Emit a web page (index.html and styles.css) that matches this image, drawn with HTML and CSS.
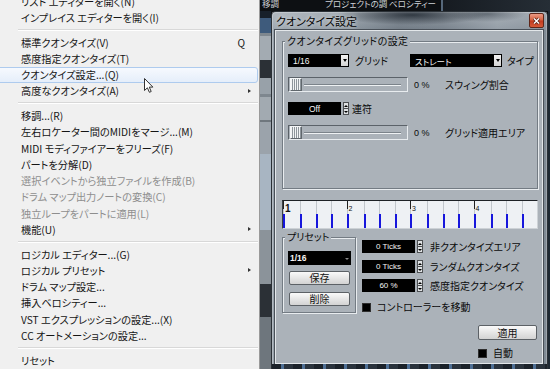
FILE: index.html
```html
<!DOCTYPE html>
<html lang="ja">
<head>
    <meta charset="UTF-8">
    <meta name="viewport" content="width=device-width, initial-scale=1.0">
    <title>クオンタイズ設定</title>
    <link rel="stylesheet" href="styles.css">
</head>
<body>
<div class="screen">
    <div class="menu">
        <ul class="menu-list">
            <li class="item">リスト エディターを開く(N)</li>
            <li class="item">インプレイス エディターを開く(I)</li>
            <li class="sep"></li>
            <li class="item">標準クオンタイズ(V)<span class="key">Q</span></li>
            <li class="item">感度指定クオンタイズ(T)</li>
            <li class="item hot">クオンタイズ設定...(Q)</li>
            <li class="item sub">高度なクオンタイズ(A)</li>
            <li class="sep"></li>
            <li class="item">移調...(R)</li>
            <li class="item">左右ロケーター間のMIDIをマージ...(M)</li>
            <li class="item">MIDI モディファイアーをフリーズ(F)</li>
            <li class="item">パートを分解(D)</li>
            <li class="item off">選択イベントから独立ファイルを作成(B)</li>
            <li class="item off">ドラム マップ出力ノートの変換(C)</li>
            <li class="item off">独立ループをパートに適用(L)</li>
            <li class="item sub">機能(U)</li>
            <li class="sep"></li>
            <li class="item">ロジカル エディター...(G)</li>
            <li class="item sub">ロジカル プリセット</li>
            <li class="item">ドラム マップ設定...</li>
            <li class="item">挿入ベロシティー...</li>
            <li class="item">VST エクスプレッションの設定...(X)</li>
            <li class="item">CC オートメーションの設定...</li>
            <li class="sep"></li>
            <li class="item">リセット</li>
        </ul>
        <svg class="cursor" width="10" height="16" viewBox="0 0 10 16">
            <path d="M0.5 0.5V12.5L3.4 9.8L5.4 14.3L7.2 13.5L5.3 9.1H8.9Z" fill="#fff" stroke="#333" stroke-width="1"/>
        </svg>
    </div>

    <div class="desk">
        <div class="desk-top">
            <span class="col-a">移調</span>
            <span class="col-b">プロジェクトの調</span>
            <span class="col-c">ベロシティー</span>
            <span class="col-sep"></span>
            <span class="col-rest"></span>
        </div>
        <div class="desk-main">
            <div class="tracks">
                <div class="t-dark"></div>
                <div class="t-blue"></div>
                <div class="t-line"></div>
                <div class="t-grey"></div>
                <div class="t-shade"></div>
                <div class="t-part"></div>
                <div class="t-line"></div>
                <div class="t-part tall"></div>
                <div class="t-lane"></div>
                <div class="t-mid"></div>
                <div class="t-shade low"></div>
                <div class="t-end"></div>
            </div>

            <div class="window">
                <div class="titlebar">
                    <span class="title">クオンタイズ設定</span>
                    <span class="close">
                        <svg width="9" height="8" viewBox="0 0 9 8">
                            <path d="M2 1.5L7 6.5M7 1.5L2 6.5" stroke="#5a2418" stroke-width="3"/>
                            <path d="M2 1.5L7 6.5M7 1.5L2 6.5" stroke="#fff" stroke-width="1.4"/>
                        </svg>
                    </span>
                </div>

                <div class="client">
                    <fieldset class="group grid-set">
                        <legend>クオンタイズグリッドの設定</legend>
                        <div class="row">
                            <div class="dd w61">1/16<span class="dd-btn"></span></div>
                            <span class="lbl w55">グリッド</span>
                            <div class="dd w92">ストレート<span class="dd-btn"></span></div>
                            <span class="lbl ml5">タイプ</span>
                        </div>
                        <div class="row mt10">
                            <div class="slider"><span class="thumb"></span><span class="groove"></span></div>
                            <span class="pct">0 %</span>
                            <span class="lbl">スウィング割合</span>
                        </div>
                        <div class="row mt10">
                            <div class="field w53 h14">Off</div>
                            <span class="spin"><i class="up"></i><i class="down"></i></span>
                            <span class="lbl ml3">連符</span>
                        </div>
                        <div class="row mt10">
                            <div class="slider"><span class="thumb"></span><span class="groove"></span></div>
                            <span class="pct">0 %</span>
                            <span class="lbl">グリッド適用エリア</span>
                        </div>
                    </fieldset>

                    <div class="grid">
                        <div class="cell bar first">1</div>
                        <div class="cell"></div>
                        <div class="cell"></div>
                        <div class="cell"></div>
                        <div class="cell bar">2</div>
                        <div class="cell"></div>
                        <div class="cell"></div>
                        <div class="cell"></div>
                        <div class="cell bar">3</div>
                        <div class="cell"></div>
                        <div class="cell"></div>
                        <div class="cell"></div>
                        <div class="cell bar">4</div>
                        <div class="cell"></div>
                        <div class="cell"></div>
                        <div class="cell"></div>
                    </div>

                    <div class="bottom">
                        <fieldset class="group preset">
                            <legend>プリセット</legend>
                            <div class="dd dd-preset">1/16<span class="dd-arrow"></span></div>
                            <button class="btn">保存</button>
                            <button class="btn mt7">削除</button>
                        </fieldset>
                        <div class="params">
                            <div class="row">
                                <div class="field w53">0 Ticks</div>
                                <span class="spin"><i class="up"></i><i class="down"></i></span>
                                <span class="lbl ml7">非クオンタイズエリア</span>
                            </div>
                            <div class="row mt7">
                                <div class="field w53">0 Ticks</div>
                                <span class="spin"><i class="up"></i><i class="down"></i></span>
                                <span class="lbl ml7">ランダムクオンタイズ</span>
                            </div>
                            <div class="row mt6">
                                <div class="field w53">60 %</div>
                                <span class="spin"><i class="up"></i><i class="down"></i></span>
                                <span class="lbl ml7">感度指定クオンタイズ</span>
                            </div>
                            <div class="row mt9">
                                <span class="check"></span>
                                <span class="lbl ml6">コントローラーを移動</span>
                            </div>
                        </div>
                    </div>

                    <div class="apply">
                        <button class="btn btn-apply">適用</button>
                        <div class="row mt7">
                            <span class="check"></span>
                            <span class="lbl ml6">自動</span>
                        </div>
                    </div>
                </div>
                <div class="win-bottom"></div>
            </div>
            <div class="desk-edge"></div>
        </div>
    </div>
</div>
</body>
</html>
```

FILE: styles.css
```css
* {
    box-sizing: border-box;
}
body {
    margin: 0;
    background: #14181c;
    overflow: hidden;
}
.screen {
    display: flex;
    width: 550px;
    height: 369px;
    overflow: hidden;
    font-family: "Noto Sans CJK JP", "Noto Sans", sans-serif;
    font-feature-settings: "palt";
}

/* context menu */
.menu {
    position: relative;
    flex: none;
    width: 260px;
    background: #f0f0f0;
    border-right: 1px solid #9a9a9a;
    font-size: 10.2px;
    color: #151515;
}
.menu-list {
    list-style: none;
    margin: -7px 0 0;
    padding: 0;
}
.item {
    display: flex;
    align-items: center;
    height: 16.25px;
    padding-left: 21px;
    white-space: nowrap;
}
.item.off {
    color: #8e8e8e;
}
.item.hot {
    margin: 0 1px 0 -4px;
    padding-left: 24px;
    background: linear-gradient(#f6f9fe, #e5eefa);
    border: 1px solid #aecbee;
    border-radius: 3px;
}
.key {
    margin-left: auto;
    margin-right: 14px;
}
.sub::after {
    content: "";
    margin-left: auto;
    margin-right: 8px;
    border-left: 3px solid #333;
    border-top: 2.5px solid transparent;
    border-bottom: 2.5px solid transparent;
}
.sep {
    display: flex;
    align-items: center;
    height: 8.5px;
    padding: 0 1px 0 18px;
}
.sep::after {
    content: "";
    flex: 1;
    border-top: 1px solid #d8d8d8;
    border-bottom: 1px solid #fff;
}
.cursor {
    position: absolute;
    left: 144px;
    top: 78px;
}

/* cubase behind the dialog */
.desk {
    display: flex;
    flex-direction: column;
    flex: none;
    width: 290px;
    background: #0d1013;
}
.desk-top {
    display: flex;
    height: 11px;
    overflow: hidden;
    color: #cdd2d6;
    font-size: 8.5px;
    line-height: 9px;
    white-space: nowrap;
}
.desk-top span {
    flex: none;
    margin-top: -1px;
    overflow: hidden;
}
.col-a { width: 65px; padding-left: 2px; }
.col-b { width: 64px; }
.col-c { width: 52px; }
.col-sep {
    width: 2px;
    margin-top: 0 !important;
    background: #56687b;
}
.desk-top .col-rest {
    flex: 1;
    margin-top: 0;
    background: linear-gradient(90deg, #161b21, #262e36);
}
.desk-main {
    display: flex;
    flex: 1;
}
.tracks {
    display: flex;
    flex-direction: column;
    width: 11px;
}
.t-dark { height: 7px; background: #17202a; }
.t-blue { height: 15px; background: #3e5b7c; }
.t-line { height: 3px; background: #7e878f; }
.t-grey { height: 24px; background: #a3abb2; }
.t-shade { height: 18px; background: #2b3036; }
.t-shade.low { height: 33px; }
.t-part { height: 16px; background: #98a1a9; }
.t-part.tall { height: 57px; background: linear-gradient(#a2aab1 0 40%, #6f777e 40% 44%, #9ba3ab 44%); }
.t-lane { height: 76px; background: #a8b5c2; }
.t-mid { height: 54px; background: #8b939a; }
.t-end { flex: 1; background: #6e767d; }
.desk-edge {
    flex: 1;
    background: #1e2933;
}

/* dialog window */
.window {
    display: flex;
    flex-direction: column;
    width: 277px;
    border: 1px solid #2a3036;
    border-bottom: 0;
    border-radius: 5px 5px 0 0;
    background: linear-gradient(90deg, #98a2ab 0%, #8a959f 22%, #66717c 46%, #6d7883 62%, #8c96a0 82%, #7f8a94 100%);
    box-shadow: inset 0 0 0 1px rgba(255, 255, 255, 0.25);
}
.titlebar {
    display: flex;
    height: 18px;
    padding-left: 4px;
    background:
        radial-gradient(ellipse 75px 10px at 140px 3px, rgba(28, 36, 45, 0.8), rgba(28, 36, 45, 0)),
        radial-gradient(ellipse 40px 8px at 215px 2px, rgba(40, 50, 60, 0.5), rgba(40, 50, 60, 0)),
        linear-gradient(rgba(255, 255, 255, 0.25), rgba(255, 255, 255, 0.08));
}
.title {
    font-size: 11px;
    line-height: 18px;
    color: #050505;
    text-shadow: 0 0 4px rgba(255, 255, 255, 0.8);
}
.close {
    display: flex;
    align-items: center;
    justify-content: center;
    width: 15px;
    height: 15px;
    margin: 1px 3px 0 auto;
    border: 1px solid #5e2619;
    border-radius: 2px;
    background: linear-gradient(#eb9a84, #d4603f 48%, #c0391d 52%, #d65a38);
}
.client {
    height: 334px;
    margin: 0 4px 0 3px;
    padding: 4px 4px 0 6px;
    background: #abb2b9;
    border: 1px solid #e3e7ea;
    box-shadow: 0 0 0 1px #495058;
    font-size: 10px;
    color: #0a0a0a;
}
.win-bottom {
    height: 5px;
    margin-top: auto;
    background: repeating-linear-gradient(90deg, #1b222a 0 9px, #4e6f95 9px 12px, #2a333d 12px 21px);
}

/* group boxes */
.group {
    margin: 0;
    min-width: 0;
    border: 1px solid #737b83;
    box-shadow: inset 1px 1px 0 #e8ecef, 1px 1px 0 #e8ecef;
}
.group legend {
    margin-left: -3px;
    padding: 0 2px;
    line-height: 12px;
    background: #abb2b9;
}
.grid-set legend {
    letter-spacing: 0.4px;
}
.grid-set {
    padding: 7px 0 48px 5px;
}
.row {
    display: flex;
    align-items: center;
}
.lbl {
    line-height: 12px;
    white-space: nowrap;
}
.mt6 { margin-top: 6px; }
.mt7 { margin-top: 7px; }
.mt9 { margin-top: 9px; }
.mt10 { margin-top: 10px; }
.ml3 { margin-left: 3px; }
.ml5 { margin-left: 5px; }
.ml6 { margin-left: 6px; }
.ml7 { margin-left: 7px; }
.w53 { width: 53px; }
.w55 { width: 55px; margin-left: 6px; }
.w61 { width: 61px; }
.w92 { width: 92px; }
.h14 { height: 14px; }

/* black value fields */
.dd, .field {
    display: flex;
    align-items: center;
    height: 13px;
    background: #000;
    color: #f4f4f4;
    font: 8.5px "Liberation Sans", "Noto Sans CJK JP", sans-serif;
    font-feature-settings: "palt";
    white-space: nowrap;
}
.dd {
    padding-left: 5px;
}
.field {
    justify-content: center;
}
.dd-btn {
    display: flex;
    align-items: center;
    justify-content: center;
    width: 7px;
    height: 11px;
    margin: 0 1px 0 auto;
    background: linear-gradient(#f2f2f2, #d4d4d4);
}
.dd-btn::after {
    content: "";
    border-top: 3px solid #000;
    border-left: 2.5px solid transparent;
    border-right: 2.5px solid transparent;
}
.dd-preset {
    height: 14px;
    padding-left: 2px;
    font-weight: bold;
}
.dd-arrow {
    margin: 2px 2px 0 auto;
    border-top: 2px solid #8a8a8a;
    border-left: 2px solid transparent;
    border-right: 2px solid transparent;
}
.spin {
    display: flex;
    flex-direction: column;
    width: 6px;
    height: 13px;
    margin-left: 2px;
}
.spin i {
    display: flex;
    align-items: center;
    justify-content: center;
    flex: 1;
    background: #dfe2e4;
    border: 1px solid #4c4f52;
}
.spin i + i {
    border-top: 0;
}
.spin .up::after {
    content: "";
    border-bottom: 2px solid #000;
    border-left: 2px solid transparent;
    border-right: 2px solid transparent;
}
.spin .down::after {
    content: "";
    border-top: 2px solid #000;
    border-left: 2px solid transparent;
    border-right: 2px solid transparent;
}

/* sliders */
.slider {
    display: flex;
    align-items: center;
    width: 120px;
    height: 15px;
    padding-left: 1px;
    border: 1px solid;
    border-color: #5b6269 #e8ecef #e8ecef #5b6269;
}
.thumb {
    width: 12px;
    height: 13px;
    border: 1px solid #60676d;
    border-left-color: #f4f6f7;
    border-top-color: #f4f6f7;
    background: repeating-linear-gradient(90deg, #f2f4f5 0 1px, #8d959b 1px 2px);
}
.groove {
    flex: 1;
    height: 2px;
    margin: 0 6px 0 2px;
    border-top: 1px solid #7b838a;
    border-bottom: 1px solid #eef1f3;
}
.pct {
    width: 31px;
    margin-left: 6px;
    font: 9px "Liberation Sans", sans-serif;
}

/* step grid */
.grid {
    display: flex;
    height: 29px;
    margin-top: 11px;
    background: #eef1f4;
    border: 1px solid;
    border-color: #1d2125 #cdd2d6 #cdd2d6 #3a3f44;
}
.cell {
    flex: 1;
    background:
        linear-gradient(#1616dc, #1616dc) left bottom / 2px 14px no-repeat,
        linear-gradient(#c1c6cb, #c1c6cb) left top / 1px 100% no-repeat;
}
.cell.bar {
    padding: 4px 0 0 2px;
    font: 7px/8px "Liberation Sans", sans-serif;
    color: #111;
    background:
        linear-gradient(#202020, #202020) left top / 1px 8px no-repeat,
        linear-gradient(#1616dc, #1616dc) left bottom / 2px 14px no-repeat,
        linear-gradient(#c1c6cb, #c1c6cb) left top / 1px 100% no-repeat;
}
.cell.first {
    padding-top: 3px;
    font: bold 10px/10px "Liberation Sans", sans-serif;
}

/* presets and parameters */
.bottom {
    display: flex;
    align-items: flex-start;
    margin-top: 2px;
}
.preset {
    flex: none;
    width: 74px;
    padding: 8px 4px 6px 5px;
}
.btn {
    display: block;
    width: 61px;
    height: 14px;
    margin: 6px 0 0 1px;
    padding: 0;
    border: 1px solid #5c6166;
    border-radius: 2px;
    background: linear-gradient(#fafafa, #e6e6e6 50%, #d3d3d3);
    font: inherit;
    line-height: 12px;
    color: #111;
}
.btn.mt7 {
    margin-top: 7px;
}
.params {
    margin-left: 6px;
    padding-top: 9px;
}
.params .field {
    height: 13px;
    font-size: 8px;
}
.check {
    width: 9px;
    height: 9px;
    background: #000;
    border: 1px solid #2e2e2e;
}
.apply {
    width: 59px;
    margin: 12px 1px 0 auto;
}
.btn-apply {
    width: 59px;
    height: 15px;
    margin: 0;
    line-height: 13px;
}
```
